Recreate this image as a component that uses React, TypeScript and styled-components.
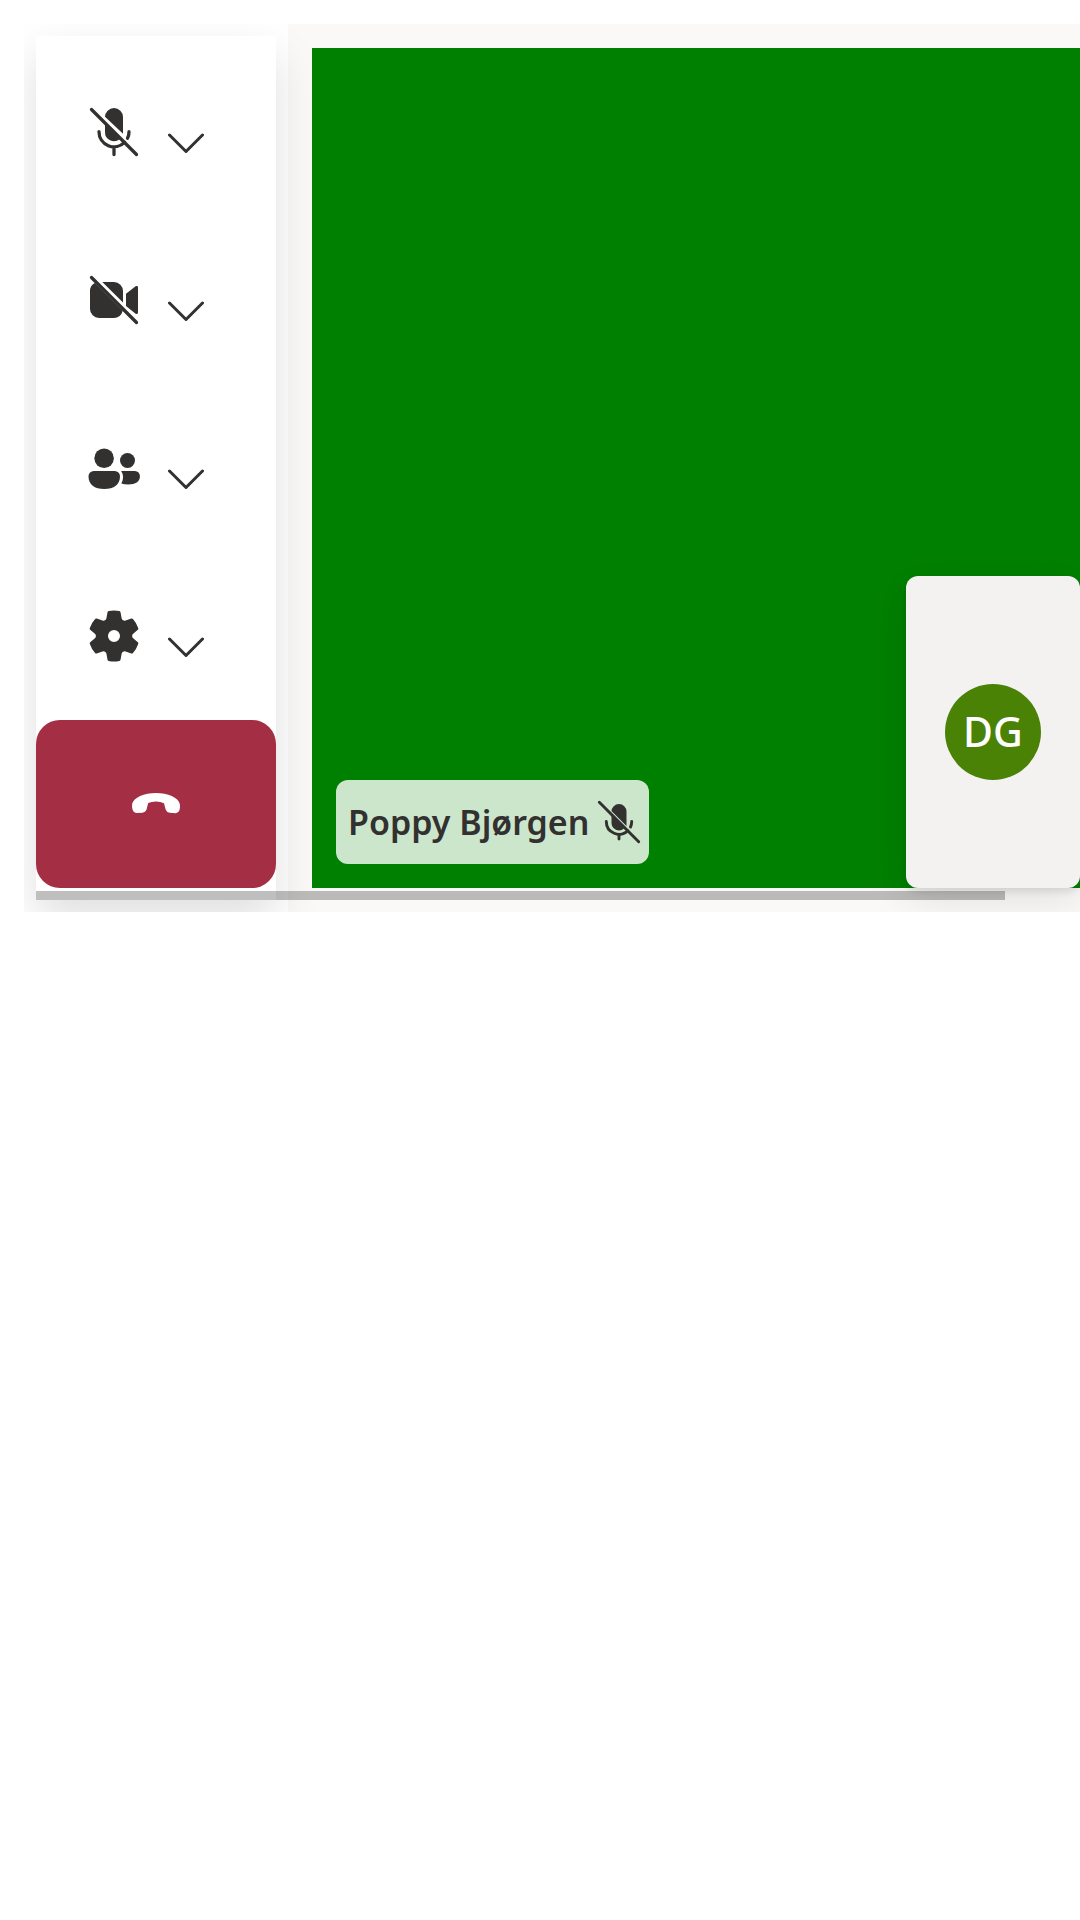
import React from 'react';
import styled, { createGlobalStyle } from 'styled-components';

const GlobalStyle = createGlobalStyle`
  *, *::before, *::after { box-sizing: border-box; }
  body {
    margin: 0;
    background: #ffffff;
    color: #323130;
    font-family: 'Noto Sans', 'Open Sans', sans-serif;
  }
`;

const Page = styled.div`
  padding: 24px 0 24px 24px;
`;

const CallFrame = styled.main`
  position: relative;
  display: flex;
  overflow: hidden;
  background: #ffffff;
`;

const ControlRail = styled.div`
  position: relative;
  z-index: 1;
  flex: none;
  padding: 12px;
`;

const ControlBar = styled.div`
  display: flex;
  flex-direction: column;
  width: 240px;
  padding: 12px 0;
  background: #ffffff;
  box-shadow: 0 19px 43px rgba(0, 0, 0, 0.13);
`;

const ControlButton = styled.div`
  display: flex;
  align-items: center;
  gap: 24px;
  height: 168px;
  padding: 0 48px;
`;

const IconButton = styled.button`
  display: flex;
  align-items: center;
  justify-content: center;
  height: 168px;
  padding: 0;
  border: 0;
  background: none;
  color: inherit;
  cursor: pointer;
`;

const DeviceButton = styled(IconButton)`
  width: 60px;
`;

const MenuButton = styled(IconButton)`
  width: 36px;
  padding-top: 24px;
`;

const HangUpButton = styled(IconButton)`
  border-radius: 24px;
  background: #a42e43;
  color: #ffffff;
`;

const Stage = styled.section`
  flex: 1;
  display: flex;
  min-width: 0;
  padding: 24px 0 24px 24px;
  background: #faf9f8;
`;

const RemoteVideo = styled.div`
  position: relative;
  flex: 1;
  display: flex;
  align-items: flex-end;
  padding: 24px;
  background: #008000;
`;

const NameTag = styled.div`
  display: flex;
  align-items: center;
  gap: 4px;
  height: 84px;
  padding: 0 4px 0 12px;
  border-radius: 12px;
  background: rgba(255, 255, 255, 0.8);
  font-size: 34px;
  font-weight: 600;
  line-height: 48px;
  white-space: nowrap;
`;

const LocalTile = styled.div`
  position: absolute;
  right: 0;
  bottom: 0;
  display: flex;
  align-items: center;
  justify-content: center;
  width: 174px;
  height: 312px;
  border-radius: 12px;
  background: #f3f2f1;
  box-shadow: 0 10px 43px rgba(0, 0, 0, 0.11), 0 4px 7px rgba(0, 0, 0, 0.09);
`;

const Avatar = styled.div`
  display: flex;
  align-items: center;
  justify-content: center;
  width: 96px;
  height: 96px;
  padding-bottom: 2px;
  border-radius: 50%;
  background: #498205;
  color: #ffffff;
  font-size: 41px;
  font-weight: 500;
  line-height: 48px;
`;

const ScrollThumb = styled.div`
  position: absolute;
  z-index: 2;
  left: 12px;
  right: 75px;
  bottom: 12px;
  height: 9px;
  background: rgba(0, 0, 0, 0.25);
`;

const Glyph = styled.svg<{ $size: number }>`
  display: block;
  flex: none;
  width: ${({ $size }) => $size}px;
  height: ${({ $size }) => $size}px;
  fill: currentColor;
`;

const Stroke = styled.path`
  fill: none;
  stroke: currentColor;
  stroke-linecap: round;
  stroke-linejoin: round;
`;

const MicOffIcon = () => (
  <Glyph $size={60} viewBox="0 0 20 20" aria-hidden="true">
    <path d="M7 7.5V10a3 3 0 0 0 4.9 2.4ZM7 5a3 3 0 0 1 6 0v5.6L7 4.9Z" />
    <Stroke strokeWidth="1.1" d="M5 9.9a5 5 0 0 0 8.6 3.5M15 9.9q0 1.2-.5 2.2M10 15v2.5M2.5 2.5l15 15" />
  </Glyph>
);

const SmallMicOffIcon = () => (
  <Glyph $size={52} viewBox="0 0 52 52" aria-hidden="true">
    <path d="M18.500 19v8a7.500 7.500 0 0 0 12.500 5.500ZM18.500 15.500a7.500 7.500 0 0 1 15 0V30L18.500 15Z" />
    <Stroke strokeWidth="2.900" d="M13.300 25.500a12.700 12.700 0 0 0 21.700 9M38.700 25.500q0 3-1.200 5.500M26 39v4M6.300 6.300l39.400 39.400" />
  </Glyph>
);

const VideoOffIcon = () => (
  <Glyph $size={60} viewBox="0 0 20 20" aria-hidden="true">
    <path d="M3.600 4.300A3 3 0 0 0 2 7v6a3 3 0 0 0 3 3h5a3 3 0 0 0 2.900-2.400ZM6.100 4H10a3 3 0 0 1 3 3v3.800ZM14 7.900l3.200-2.500a.5.5 0 0 1 .8.4v8.400a.5.5 0 0 1-.8.4L14 12Z" />
    <Stroke strokeWidth="1.1" d="M2.500 2.500l15 15" />
  </Glyph>
);

const PeopleIcon = () => (
  <Glyph $size={60} viewBox="0 0 20 20" aria-hidden="true">
    <circle cx="6.700" cy="6.750" r="3.250" />
    <circle cx="14.500" cy="7.500" r="2.500" />
    <path d="M3.250 11h7A1.750 1.750 0 0 1 12 12.750C12 15.500 10 17 6.750 17S1.500 15.500 1.500 12.750A1.750 1.750 0 0 1 3.250 11ZM12.400 11H17a1.650 1.750 0 0 1 1.650 1.750c0 1.800-1.500 2.750-3.900 2.750q-1.300 0-2.300-.3c.8-1.500.8-2.900-.050-4.200Z" />
  </Glyph>
);

const SettingsIcon = () => (
  <Glyph $size={60} viewBox="0 0 20 20" aria-hidden="true">
    <path d="M1.91 7.38A8.5 8.5 0 0 1 3.7 4.3a.5.5 0 0 1 .54-.13l1.92.68a1 1 0 0 0 1.32-.76l.36-2a.5.5 0 0 1 .4-.4 8.53 8.53 0 0 1 3.55 0c.2.04.35.2.38.4l.37 2a1 1 0 0 0 1.32.76l1.92-.68a.5.5 0 0 1 .54.13 8.5 8.5 0 0 1 1.78 3.08c.06.2 0 .4-.15.54l-1.56 1.32a1 1 0 0 0 0 1.52l1.56 1.32a.5.5 0 0 1 .15.54 8.5 8.5 0 0 1-1.78 3.08.5.5 0 0 1-.54.13l-1.92-.68a1 1 0 0 0-1.32.76l-.37 2a.5.5 0 0 1-.38.4 8.53 8.53 0 0 1-3.56 0 .5.5 0 0 1-.39-.4l-.36-2a1 1 0 0 0-1.32-.76l-1.92.68a.5.5 0 0 1-.54-.13 8.5 8.5 0 0 1-1.78-3.08.5.5 0 0 1 .15-.54l1.56-1.32a1 1 0 0 0 0-1.52L2.06 7.92a.5.5 0 0 1-.15-.54ZM8 10a2 2 0 1 0 4 0 2 2 0 0 0-4 0Z" />
  </Glyph>
);

const HangUpIcon = () => (
  <Glyph $size={60} viewBox="0 0 20 20" aria-hidden="true">
    <path d="M10 6.300c3.900 0 7.500 1.500 7.950 3.700q.15 1-.1 2-.3 1-1.200 1.050l-2.100-.1q-1-.1-1.300-1l-.6-2.200Q11.500 9.200 10 9.200t-2.600.5L6.800 12q-.3.800-1.300.9l-2.100.1q-.9-.05-1.200-1.050-.3-1-.15-2C2.500 7.800 6.100 6.300 10 6.300Z" />
  </Glyph>
);

const ChevronIcon = () => (
  <Glyph $size={36} viewBox="0 0 36 36" aria-hidden="true">
    <Stroke strokeWidth="3" d="M1.500 9 18 25.500 34.500 9" />
  </Glyph>
);

const controls = [
  { label: 'Unmute', menu: 'Microphone options', Icon: MicOffIcon },
  { label: 'Turn on camera', menu: 'Camera options', Icon: VideoOffIcon },
  { label: 'People', menu: 'People options', Icon: PeopleIcon },
  { label: 'Devices', menu: 'Device options', Icon: SettingsIcon },
];

export default function App() {
  return (
    <Page>
      <GlobalStyle />
      <CallFrame>
        <ControlRail>
          <ControlBar role="toolbar" aria-label="Call controls">
            {controls.map(({ label, menu, Icon }) => (
              <ControlButton key={label}>
                <DeviceButton type="button" aria-label={label}>
                  <Icon />
                </DeviceButton>
                <MenuButton type="button" aria-label={menu}>
                  <ChevronIcon />
                </MenuButton>
              </ControlButton>
            ))}
            <HangUpButton type="button" aria-label="Leave call">
              <HangUpIcon />
            </HangUpButton>
          </ControlBar>
        </ControlRail>
        <Stage>
          <RemoteVideo>
            <NameTag>
              Poppy Bjørgen
              <SmallMicOffIcon />
            </NameTag>
            <LocalTile>
              <Avatar>DG</Avatar>
            </LocalTile>
          </RemoteVideo>
        </Stage>
        <ScrollThumb />
      </CallFrame>
    </Page>
  );
}
